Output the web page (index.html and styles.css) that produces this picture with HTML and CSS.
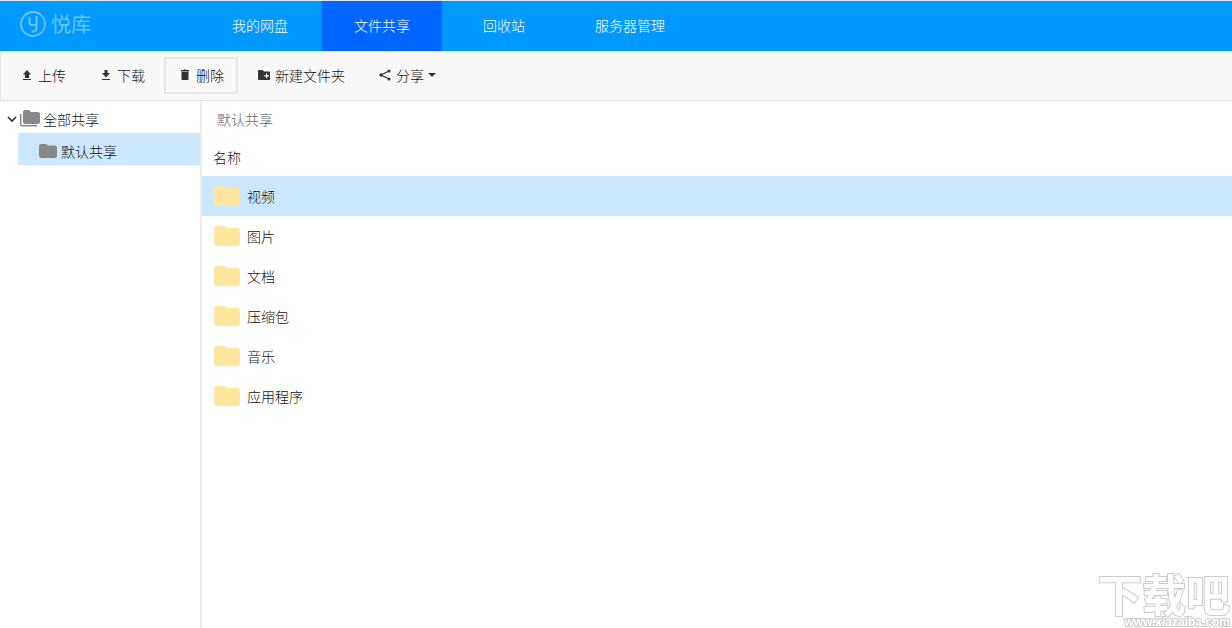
FILE: index.html
```html
<!DOCTYPE html>
<html lang="zh-CN">
<head>
<meta charset="utf-8">
<title>悦库</title>
<link rel="stylesheet" href="styles.css">
</head>
<body>
<svg class="defs" aria-hidden="true">
  <symbol id="folder" viewBox="0 0 26 20"><path d="M0 3Q0 0 3 0H9Q11 0 12 1L13 2H23Q26 2 26 5V17Q26 20 23 20H3Q0 20 0 17Z"/></symbol>
</svg>
<header class="topbar">
  <a class="logo" href="#">
    <svg class="logo-mark" viewBox="0 0 26 26" fill="none" stroke="currentColor" stroke-width="2" aria-hidden="true">
      <circle cx="13" cy="13" r="12" stroke-width="1.8"/>
      <path d="M9.500 6V11.500Q9.500 14 12 14H16.500M16.500 5V17Q16.500 20.500 12 20.500"/>
    </svg>
    <span>悦库</span>
  </a>
  <nav class="nav">
    <a href="#">我的网盘</a>
    <a class="active" href="#">文件共享</a>
    <a href="#">回收站</a>
    <a href="#">服务器管理</a>
  </nav>
</header>
<div class="toolbar">
  <button class="tool" type="button">
    <svg viewBox="0 0 14 14" aria-hidden="true"><path d="M7 2L11 6.500H9V10H5V6.500H3ZM3 11H11V12H3Z"/></svg>上传
  </button>
  <button class="tool" type="button">
    <svg viewBox="0 0 14 14" aria-hidden="true"><path d="M5.500 2H8.500V5H11L7 9.500L3 5H5.500ZM3 11H11V12H3Z"/></svg>下载
  </button>
  <button class="tool focused" type="button">
    <svg viewBox="0 0 14 14" aria-hidden="true"><path d="M3 2H5.500L6 1.500H8L8.500 2H11V3.500H3ZM3.500 4H10.500V11Q10.500 12 9.500 12H4.500Q3.500 12 3.500 11Z"/></svg>删除
  </button>
  <button class="tool" type="button">
    <svg viewBox="0 0 14 14" aria-hidden="true"><path fill-rule="evenodd" d="M1 3Q1 2 2 2H5.500L7 3.500H12Q13 3.500 13 4.500V11Q13 12 12 12H2Q1 12 1 11ZM9 5.500V7.200H7.200V8.400H9V10.200H10.200V8.400H12V7.200H10.200V5.500Z"/></svg>新建文件夹
  </button>
  <button class="tool" type="button">
    <svg viewBox="0 0 14 14" aria-hidden="true"><path d="M11 3L3 7L11 11" fill="none" stroke="currentColor" stroke-width="1.200"/><circle cx="11" cy="3" r="1.500"/><circle cx="3" cy="7" r="1.700"/><circle cx="11" cy="11" r="1.500"/></svg>分享<span class="caret"></span>
  </button>
</div>
<div class="content">
  <aside class="sidebar">
    <ul class="tree">
      <li>
        <a class="node" href="#">
          <svg class="chevron" viewBox="0 0 10 8" aria-hidden="true"><path d="M1 2L5 6L9 2" fill="none" stroke="#333" stroke-width="1.700"/></svg>
          <svg class="stack" viewBox="0 0 20 18" aria-hidden="true"><path d="M3 2Q3 0 5 0H9L11 2H18Q20 2 20 4V12Q20 14 18 14H5Q3 14 3 12ZM0 4H1.500V15H17V16.500H2Q0 16.500 0 14.500Z"/></svg>
          <span>全部共享</span>
        </a>
        <ul>
          <li><a class="node child selected" href="#"><svg class="small-folder" aria-hidden="true"><use href="#folder"/></svg><span>默认共享</span></a></li>
        </ul>
      </li>
    </ul>
  </aside>
  <main class="main">
    <div class="crumb">默认共享</div>
    <table class="files">
      <thead><tr><th scope="col">名称</th></tr></thead>
      <tbody>
        <tr class="selected"><td><div class="file"><svg aria-hidden="true"><use href="#folder"/></svg>视频</div></td></tr>
        <tr><td><div class="file"><svg aria-hidden="true"><use href="#folder"/></svg>图片</div></td></tr>
        <tr><td><div class="file"><svg aria-hidden="true"><use href="#folder"/></svg>文档</div></td></tr>
        <tr><td><div class="file"><svg aria-hidden="true"><use href="#folder"/></svg>压缩包</div></td></tr>
        <tr><td><div class="file"><svg aria-hidden="true"><use href="#folder"/></svg>音乐</div></td></tr>
        <tr><td><div class="file"><svg aria-hidden="true"><use href="#folder"/></svg>应用程序</div></td></tr>
      </tbody>
    </table>
  </main>
</div>
<div class="watermark">
  <span class="mark-name">下载吧</span>
  <span class="mark-url">www.xiazaiba.com</span>
</div>
</body>
</html>
```
FILE: styles.css
```css
* { box-sizing: border-box; }
body {
  margin: 0;
  min-height: 100vh;
  display: flex;
  flex-direction: column;
  background: #fff;
  color: #111;
  font: 300 14px/20px "Noto Sans CJK SC", sans-serif;
}
a { color: inherit; text-decoration: none; }
ul { margin: 0; padding: 0; list-style: none; }
svg { display: block; flex: none; fill: currentColor; }
.defs { position: absolute; width: 0; height: 0; }

.topbar {
  display: flex;
  height: 51px;
  border-top: 1px solid #dce6ec;
  background: #09f;
}
.logo {
  display: flex;
  align-items: center;
  gap: 5px;
  width: 200px;
  padding: 0 0 4px 20px;
  color: #6bc4ff;
  font-size: 20px;
  font-weight: 400;
}
.logo-mark { width: 26px; height: 26px; fill: none; }
.nav { display: flex; gap: 2px; color: #fff; }
.nav a {
  min-width: 120px;
  padding: 0 29px;
  line-height: 48px;
  text-align: center;
}
.nav .active { background: #06f; }

.toolbar {
  display: flex;
  align-items: center;
  gap: 5px;
  height: 50px;
  padding: 0 5px 1px;
  border: 1px solid #e6e6e6;
  border-right: 0;
  background: #f8f8f8;
}
.tool {
  display: flex;
  align-items: center;
  height: 37px;
  padding: 0 12px 1px;
  border: 2px solid transparent;
  background: none;
  color: inherit;
  font: inherit;
}
.tool svg { width: 14px; height: 14px; margin-right: 4px; color: #333; }
.focused { border-color: #e6e6e6; }
.caret {
  margin-left: 4px;
  border: 4px solid transparent;
  border-top-color: #333;
  border-bottom: 0;
}

.content { display: flex; flex: 1; }
.sidebar { width: 202px; border-right: 2px solid #eee; }
.node {
  display: flex;
  align-items: center;
  height: 32px;
  padding: 4px 0 0 7px;
}
.chevron { width: 10px; height: 8px; margin-right: 3px; }
.stack { width: 20px; height: 18px; margin-right: 3px; color: #888; }
.child { margin-left: 18px; padding-left: 21px; }
.small-folder { width: 18px; height: 14px; margin-right: 4px; color: #888; }
.selected { background: #cce8ff; }

.main { flex: 1; }
.crumb { height: 38px; padding: 0 15px; color: #666; line-height: 36px; }
.files { width: 100%; border-collapse: collapse; }
.files th {
  height: 37px;
  padding: 0 11px 2px;
  font-weight: inherit;
  text-align: left;
}
.files td { height: 40px; padding: 0 12px; }
.file { display: flex; align-items: center; gap: 7px; }
.file svg { width: 26px; height: 20px; color: #ffe59d; }

.watermark {
  position: fixed;
  right: 2px;
  bottom: 0;
  display: grid;
  justify-items: end;
  color: #fff;
  font-weight: 700;
  -webkit-text-stroke: 2px #ccc;
  paint-order: stroke fill;
}
.mark-name { font-size: 44px; line-height: 46px; }
.mark-url {
  font: 700 12px/12px "Liberation Sans", sans-serif;
}
```
